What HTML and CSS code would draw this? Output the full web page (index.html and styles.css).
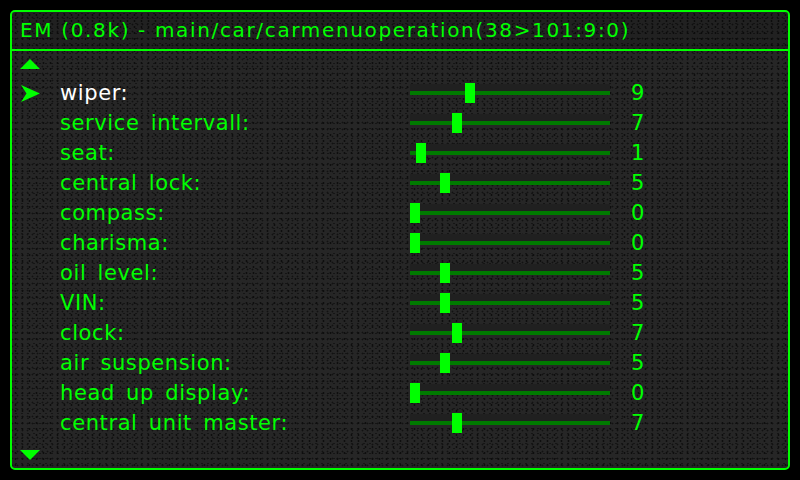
FILE: index.html
```html
<!DOCTYPE html>
<html>
<head>
<meta charset="utf-8">
<link rel="stylesheet" href="styles.css">
</head>
<body>
<div class="panel">
  <div class="header">EM (0.8k) - main/car/carmenuoperation(38&gt;101:9:0)</div>
  <div class="content">
    <div class="scroll up"><svg width="20" height="10" viewBox="0 0 20 10"><polygon points="0,10 10,0 20,10" fill="#00ff00"/></svg></div>
    <div class="rows">
      <div class="row active"><span class="marker"><svg width="20" height="17" viewBox="0 0 20 17"><polygon points="0,0 19,8.5 0,17 5.5,8.5" fill="#00ff00"/></svg></span><span class="label">wiper:</span><span class="slider"><span class="track"></span><span class="thumb" style="left:55px"></span></span><span class="value">9</span></div>
      <div class="row"><span class="marker"></span><span class="label">service intervall:</span><span class="slider"><span class="track"></span><span class="thumb" style="left:42px"></span></span><span class="value">7</span></div>
      <div class="row"><span class="marker"></span><span class="label">seat:</span><span class="slider"><span class="track"></span><span class="thumb" style="left:6px"></span></span><span class="value">1</span></div>
      <div class="row"><span class="marker"></span><span class="label">central lock:</span><span class="slider"><span class="track"></span><span class="thumb" style="left:30px"></span></span><span class="value">5</span></div>
      <div class="row"><span class="marker"></span><span class="label">compass:</span><span class="slider"><span class="track"></span><span class="thumb" style="left:0px"></span></span><span class="value">0</span></div>
      <div class="row"><span class="marker"></span><span class="label">charisma:</span><span class="slider"><span class="track"></span><span class="thumb" style="left:0px"></span></span><span class="value">0</span></div>
      <div class="row"><span class="marker"></span><span class="label">oil level:</span><span class="slider"><span class="track"></span><span class="thumb" style="left:30px"></span></span><span class="value">5</span></div>
      <div class="row"><span class="marker"></span><span class="label">VIN:</span><span class="slider"><span class="track"></span><span class="thumb" style="left:30px"></span></span><span class="value">5</span></div>
      <div class="row"><span class="marker"></span><span class="label">clock:</span><span class="slider"><span class="track"></span><span class="thumb" style="left:42px"></span></span><span class="value">7</span></div>
      <div class="row"><span class="marker"></span><span class="label">air suspension:</span><span class="slider"><span class="track"></span><span class="thumb" style="left:30px"></span></span><span class="value">5</span></div>
      <div class="row"><span class="marker"></span><span class="label">head up display:</span><span class="slider"><span class="track"></span><span class="thumb" style="left:0px"></span></span><span class="value">0</span></div>
      <div class="row"><span class="marker"></span><span class="label">central unit master:</span><span class="slider"><span class="track"></span><span class="thumb" style="left:42px"></span></span><span class="value">7</span></div>
    </div>
    <div class="scroll down"><svg width="20" height="10" viewBox="0 0 20 10"><polygon points="0,0 20,0 10,10" fill="#00ff00"/></svg></div>
  </div>
</div>
</body>
</html>
```
FILE: styles.css
```css
html, body {
  margin: 0;
  padding: 0;
  background: #000;
  width: 800px;
  height: 480px;
  overflow: hidden;
}
.panel {
  margin: 10px;
  width: 780px;
  height: 460px;
  box-sizing: border-box;
  border: 2px solid #00ff00;
  border-radius: 5px;
  background-color: #262626;
  background-image:
    radial-gradient(circle, #0e0e0e 0.9px, transparent 1.2px),
    radial-gradient(circle, #121212 0.8px, transparent 1.1px),
    radial-gradient(circle, #151515 0.7px, transparent 1px);
  background-size: 7px 6px, 5px 7px, 6px 5px;
  background-position: 0 0, 3px 2px, 1px 4px;
  display: flex;
  flex-direction: column;
  font-family: "DejaVu Sans", sans-serif;
  color: #00ff00;
}
.header {
  border-bottom: 2px solid #00ff00;
  box-sizing: border-box;
  height: 39px;
  padding-left: 8px;
  font-size: 20px;
  letter-spacing: 1.65px;
  line-height: 37px;
  white-space: nowrap;
  background-color: rgba(0, 0, 0, 0.12);
}
.content {
  display: flex;
  flex-direction: column;
}
.scroll {
  padding-left: 8px;
  display: flex;
}
.scroll svg { display: block; }
.up { padding-top: 8px; height: 19px; }
.down { padding-top: 12px; }
.rows {
  display: flex;
  flex-direction: column;
}
.row {
  height: 30px;
  display: flex;
  align-items: center;
  padding-left: 9px;
}
.marker {
  width: 39px;
  display: flex;
  align-items: center;
}
.marker svg { display: block; }
.label {
  width: 350px;
  font-size: 21px;
  letter-spacing: 0.6px;
  word-spacing: 4px;
  white-space: nowrap;
}
.row.active .label { color: #ffffff; }
.slider {
  position: relative;
  width: 200px;
  height: 20px;
}
.track {
  position: absolute;
  left: 0;
  top: 1px;
  width: 200px;
  height: 11px;
  background: linear-gradient(#202020 0, #202020 7px, #007a00 7px, #007a00 11px);
}
.thumb {
  position: absolute;
  top: 0;
  width: 10px;
  height: 20px;
  background: #00ff00;
}
.value {
  margin-left: 21px;
  font-size: 21px;
}
```
